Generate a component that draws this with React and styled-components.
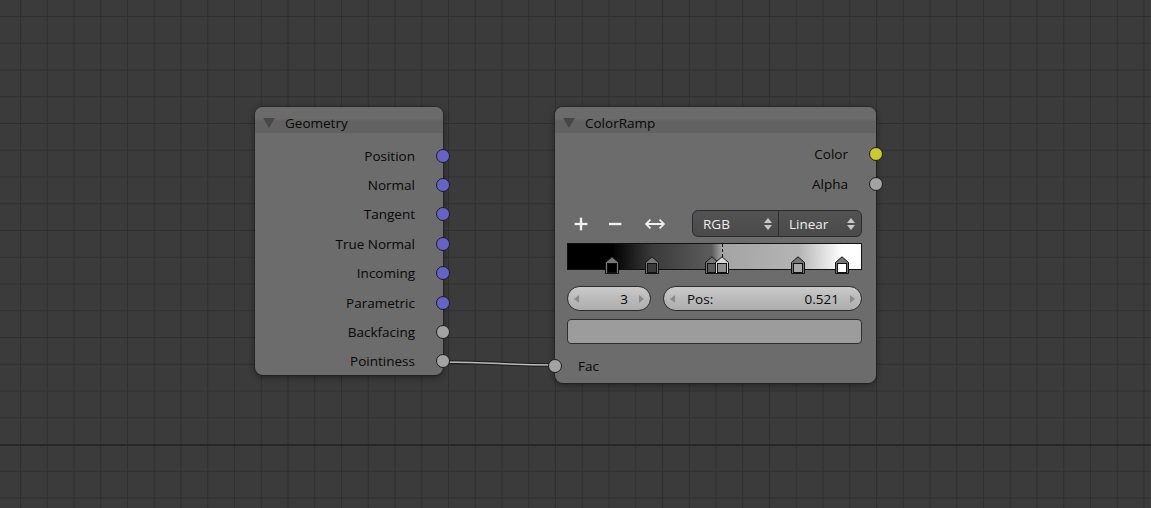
import React from "react";
import styled, { createGlobalStyle } from "styled-components";

const GlobalStyle = createGlobalStyle`
  html, body { margin: 0; padding: 0; background: #3b3b3b; }
  body { font-family: "Open Sans", "DejaVu Sans", sans-serif; }
`;

const Canvas = styled.div`
  position: relative;
  width: 1151px;
  height: 508px;
  overflow: hidden;
  background-color: #3b3b3b;
  background-image:
    linear-gradient(to bottom, transparent 444px, #282828 444px, #282828 446px, transparent 446px),
    linear-gradient(to bottom, #2f2f2f 1px, transparent 1px),
    linear-gradient(to right, #2f2f2f 1px, transparent 1px);
  background-size: 100% 100%, 26.75px 26.75px, 26.75px 26.75px;
  background-position: 0 0, 0 16px, 20px 0;
  background-repeat: no-repeat, repeat, repeat;
`;

const LinkLayer = styled.svg`
  position: absolute;
  left: 0;
  top: 0;
  width: 1151px;
  height: 508px;
  pointer-events: none;
`;

const Node = styled.div`
  position: absolute;
  left: ${(p) => p.$x}px;
  top: ${(p) => p.$y}px;
  width: ${(p) => p.$w}px;
  height: ${(p) => p.$h}px;
  display: flex;
  flex-direction: column;
  background: #6c6c6c;
  border-radius: 8px;
  box-shadow: 0 2px 7px rgba(0, 0, 0, 0.45), 0 0 0 1px rgba(30, 30, 30, 0.35);
  color: #080808;
  font-size: 13.5px;
`;

const Header = styled.div`
  height: 26px;
  box-sizing: border-box;
  padding: 5px 0 0 8px;
  flex: none;
  display: flex;
  align-items: center;
  gap: 10px;
  border-radius: 8px 8px 0 0;
  background: linear-gradient(to bottom, #6b6b6b 0%, #6b6b6b 45%, #626262 55%, #626262 100%);
  font-size: 13.5px;
  color: #080808;
`;

const Collapse = styled.span`
  width: 0;
  height: 0;
  margin-top: 1px;
  border-left: 6px solid transparent;
  border-right: 6px solid transparent;
  border-top: 10px solid #474747;
`;

const OutputList = styled.div`
  display: flex;
  flex-direction: column;
  padding-top: ${(p) => p.$pad}px;
`;

const SocketRow = styled.div`
  position: relative;
  height: ${(p) => p.$h}px;
  display: flex;
  align-items: center;
  justify-content: ${(p) => (p.$input ? "flex-start" : "flex-end")};
  padding-right: ${(p) => (p.$input ? 0 : 28)}px;
  padding-left: ${(p) => (p.$input ? 23 : 0)}px;
  flex: none;
`;

const Socket = styled.span`
  position: absolute;
  top: 50%;
  ${(p) => (p.$input ? "left: -7px;" : "right: -7px;")}
  width: 12px;
  height: 12px;
  margin-top: -7px;
  border-radius: 50%;
  background: ${(p) => p.$color};
  border: 1px solid #1c1c1c;
`;

const Controls = styled.div`
  display: flex;
  flex-direction: column;
  padding: 0 14px 0 12px;
`;

const Toolbar = styled.div`
  display: flex;
  align-items: center;
  height: 27px;
  margin-top: 11px;
  padding-left: 2px;
  gap: 10px;
`;

const ToolButton = styled.div`
  width: ${(p) => p.$w}px;
  height: 27px;
  display: flex;
  align-items: center;
  justify-content: center;
  svg {
    filter: drop-shadow(0 0 0.6px rgba(0, 0, 0, 0.8));
  }
`;

const MenuGroup = styled.div`
  margin-left: auto;
  width: 170px;
  height: 27px;
  display: flex;
  box-sizing: border-box;
  border: 1px solid #2b2b2b;
  border-radius: 6px;
  background: linear-gradient(to bottom, #535353, #4a4a4a);
  overflow: hidden;
`;

const MenuPart = styled.div`
  flex: ${(p) => p.$w}px 0 0;
  width: ${(p) => p.$w}px;
  display: flex;
  align-items: center;
  justify-content: space-between;
  padding: 0 6px 0 10px;
  box-sizing: border-box;
  color: #ececec;
  font-size: 13.5px;
  & + & {
    border-left: 1px solid #2e2e2e;
  }
`;

const UpDown = styled.span`
  display: flex;
  flex-direction: column;
  gap: 2px;
  &::before, &::after {
    content: "";
    width: 0;
    height: 0;
    border-left: 4px solid transparent;
    border-right: 4px solid transparent;
  }
  &::before { border-bottom: 5px solid #c8c8c8; }
  &::after { border-top: 5px solid #c8c8c8; }
`;

const Ramp = styled.div`
  position: relative;
  margin-top: 6px;
  height: 27px;
  box-sizing: border-box;
  border: 1px solid #111;
  background: linear-gradient(
    to right,
    #000 0%,
    #000 14.9%,
    #3a3a3a 28.8%,
    #5c5c5c 49%,
    #a4a4a4 52.5%,
    #b4b4b4 78.6%,
    #ffffff 93.6%,
    #ffffff 100%
  );
`;

const ActiveLine = styled.span`
  position: absolute;
  top: 0;
  height: 13px;
  width: 0;
  border-left: 1px dashed #111;
`;

const Stop = styled.svg`
  position: absolute;
  top: 12px;
  width: 14px;
  height: 18px;
  margin-left: -7px;
  overflow: visible;
`;

const FieldRow = styled.div`
  display: flex;
  gap: 12px;
  margin-top: 16px;
`;

const NumField = styled.div`
  flex: ${(p) => (p.$w ? `0 0 ${p.$w}px` : "1")};
  height: 25px;
  box-sizing: border-box;
  border: 1px solid #2c2c2c;
  border-radius: 13px;
  background: linear-gradient(to bottom, #cbcbcb 0%, #bdbdbd 40%, #adadad 100%);
  display: flex;
  align-items: center;
  padding: 0 6px 0 6px;
  gap: 8px;
  color: #080808;
  font-size: 13.5px;
`;

const Arrow = styled.span`
  width: 0;
  height: 0;
  border-top: 4px solid transparent;
  border-bottom: 4px solid transparent;
  ${(p) => (p.$right ? "border-left: 5px solid #8a8a8a;" : "border-right: 5px solid #8a8a8a;")}
`;

const FieldLabel = styled.span`
  margin-left: 4px;
`;

const FieldValue = styled.span`
  margin-left: auto;
  margin-right: 3px;
`;

const Swatch = styled.div`
  margin-top: 8px;
  height: 25px;
  box-sizing: border-box;
  border: 1px solid #2e2e2e;
  border-radius: 4px;
  background: #9c9c9c;
`;

const InputList = styled.div`
  display: flex;
  flex-direction: column;
  margin-top: 7px;
`;

const VEC = "#6464c8";
const GRAY = "#a3a3a3";
const YEL = "#caca2a";

const geometryOutputs = [
  ["Position", VEC],
  ["Normal", VEC],
  ["Tangent", VEC],
  ["True Normal", VEC],
  ["Incoming", VEC],
  ["Parametric", VEC],
  ["Backfacing", GRAY],
  ["Pointiness", GRAY],
];

const stops = [
  { pos: 0.149, color: "#000000" },
  { pos: 0.288, color: "#3b3b3b" },
  { pos: 0.49, color: "#5b5b5b" },
  { pos: 0.525, color: "#8e8e8e", active: true },
  { pos: 0.786, color: "#a8a8a8" },
  { pos: 0.936, color: "#ffffff" },
];

function StopMarker({ pos, color, active }) {
  return (
    <Stop viewBox="0 0 14 18" style={{ left: `${pos * 100}%` }}>
      <path
        d="M0.5 17.5 V6.5 L7 0.8 L13.5 6.5 V17.5 Z"
        fill={active ? "#d8d8d8" : "#767676"}
        stroke="#111"
        strokeWidth="1"
      />
      <rect x="2.5" y="7.5" width="9" height="9" fill={color} stroke="#111" strokeWidth="1" />
    </Stop>
  );
}

export default function App() {
  return (
    <Canvas>
      <GlobalStyle />
      <LinkLayer viewBox="0 0 1151 508">
        <path d="M443 362 C 500 362, 498 365, 555 365" fill="none" stroke="#1a1a1a" strokeWidth="3.6" />
        <path d="M443 362 C 500 362, 498 365, 555 365" fill="none" stroke="#bdbdbd" strokeWidth="1.6" />
      </LinkLayer>

      <Node $x={255} $y={107} $w={188} $h={268}>
        <Header>
          <Collapse />
          Geometry
        </Header>
        <OutputList $pad={8}>
          {geometryOutputs.map(([name, c]) => (
            <SocketRow key={name} $h={29.4}>
              {name}
              <Socket $color={c} />
            </SocketRow>
          ))}
        </OutputList>
      </Node>

      <Node $x={555} $y={107} $w={321} $h={276}>
        <Header>
          <Collapse />
          ColorRamp
        </Header>
        <OutputList $pad={6}>
          <SocketRow $h={30}>
            Color
            <Socket $color={YEL} />
          </SocketRow>
          <SocketRow $h={30}>
            Alpha
            <Socket $color={GRAY} />
          </SocketRow>
        </OutputList>
        <Controls>
          <Toolbar>
            <ToolButton $w={24}>
              <svg width="16" height="16" viewBox="0 0 16 16">
                <path d="M8 1.5 V14.5 M1.5 8 H14.5" stroke="#f0f0f0" strokeWidth="2.6" />
              </svg>
            </ToolButton>
            <ToolButton $w={24}>
              <svg width="16" height="16" viewBox="0 0 16 16">
                <path d="M2 8 H14.5" stroke="#f0f0f0" strokeWidth="2.6" />
              </svg>
            </ToolButton>
            <ToolButton $w={36}>
              <svg width="22" height="14" viewBox="0 0 22 14">
                <path
                  d="M2 7 H20 M6.5 2.5 L2 7 L6.5 11.5 M15.5 2.5 L20 7 L15.5 11.5"
                  fill="none"
                  stroke="#f0f0f0"
                  strokeWidth="1.8"
                  strokeLinejoin="miter"
                />
              </svg>
            </ToolButton>
            <MenuGroup>
              <MenuPart $w={85}>
                RGB
                <UpDown />
              </MenuPart>
              <MenuPart $w={83}>
                Linear
                <UpDown />
              </MenuPart>
            </MenuGroup>
          </Toolbar>
          <Ramp>
            <ActiveLine style={{ left: "52.5%" }} />
            {stops.map((s) => (
              <StopMarker key={s.pos} {...s} />
            ))}
          </Ramp>
          <FieldRow>
            <NumField $w={84}>
              <Arrow />
              <FieldValue>3</FieldValue>
              <Arrow $right />
            </NumField>
            <NumField>
              <Arrow />
              <FieldLabel>Pos:</FieldLabel>
              <FieldValue>0.521</FieldValue>
              <Arrow $right />
            </NumField>
          </FieldRow>
          <Swatch />
        </Controls>
        <InputList>
          <SocketRow $h={30} $input>
            Fac
            <Socket $color={GRAY} $input />
          </SocketRow>
        </InputList>
      </Node>
    </Canvas>
  );
}
